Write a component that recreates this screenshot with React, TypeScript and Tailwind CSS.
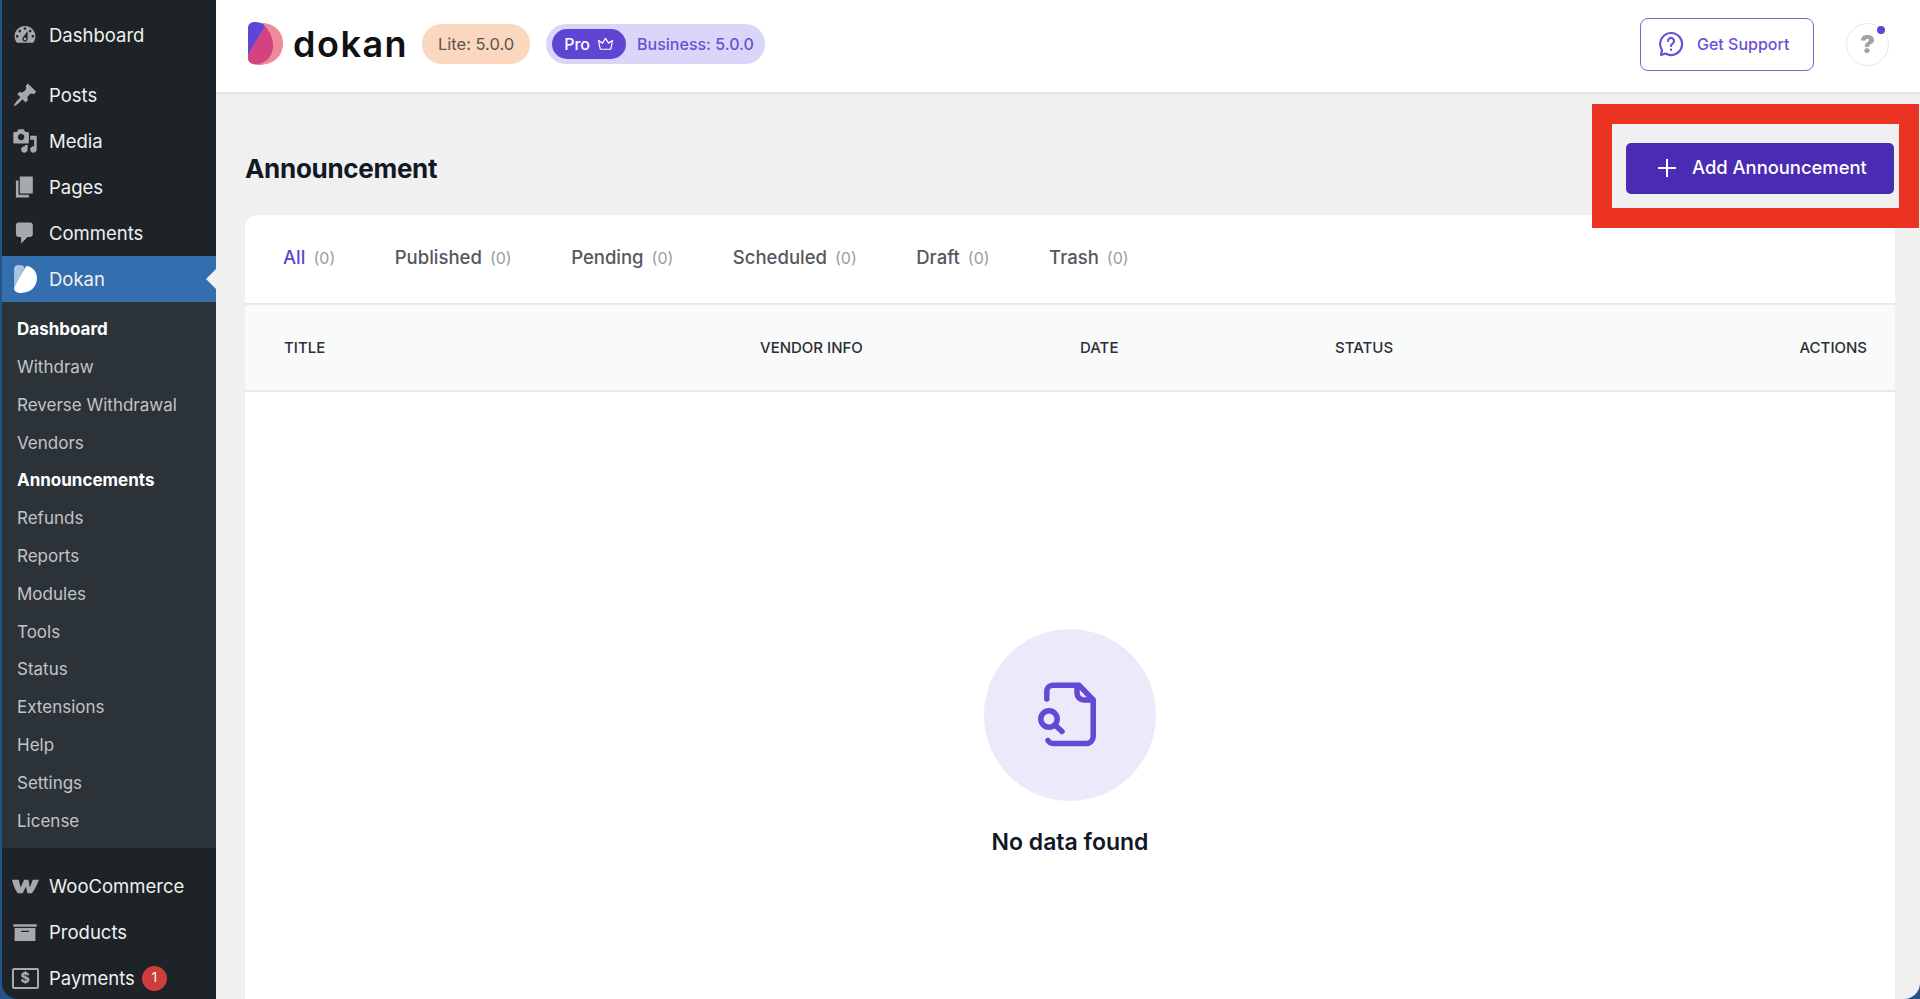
import { ReactNode } from "react";

const ICON_PATHS: Record<string, string> = {
  dashboard:
    "M3.76 16h12.48c1.1-1.37 1.76-3.11 1.76-5 0-4.42-3.58-8-8-8s-8 3.58-8 8c0 1.89.66 3.63 1.76 5zM10 4c.55 0 1 .45 1 1s-.45 1-1 1-1-.45-1-1 .45-1 1-1zM6 6c.55 0 1 .45 1 1s-.45 1-1 1-1-.45-1-1 .45-1 1-1zm8 0c.55 0 1 .45 1 1s-.45 1-1 1-1-.45-1-1 .45-1 1-1zm-5.37 5.55L12 7v6c0 1.1-.9 2-2 2s-2-.9-2-2c0-.57.24-1.08.63-1.45zM4 10c.55 0 1 .45 1 1s-.45 1-1 1-1-.45-1-1 .45-1 1-1zm12 0c.55 0 1 .45 1 1s-.45 1-1 1-1-.45-1-1 .45-1 1-1zm-5 3c0-.55-.45-1-1-1s-1 .45-1 1 .45 1 1 1 1-.45 1-1z",
  posts:
    "M10.44 3.02l1.82-1.82 6.36 6.35-1.83 1.82c-1.05-.68-2.48-.57-3.41.36l-.75.75c-.92.93-1.04 2.35-.35 3.41l-1.83 1.82-2.41-2.41-2.8 2.79c-.42.42-3.38 2.71-3.8 2.29s1.86-3.39 2.28-3.81l2.79-2.79L4.1 9.36l1.83-1.82c1.05.69 2.48.57 3.4-.36l.75-.75c.93-.92 1.05-2.35.36-3.41z",
  media:
    "M13 11V4c0-.55-.45-1-1-1h-1.67L9 1H5L3.67 3H2c-.55 0-1 .45-1 1v7c0 .55.45 1 1 1h10c.55 0 1-.45 1-1zM7 4.5c1.38 0 2.5 1.12 2.5 2.5S8.38 9.5 7 9.5 4.5 8.38 4.5 7 5.62 4.5 7 4.5zM14 6h5v10.5c0 1.38-1.12 2.5-2.5 2.5S14 17.88 14 16.5s1.12-2.5 2.5-2.5c.17 0 .34.02.5.05V9h-3V6zm-4 8.05V13h2v3.5c0 1.38-1.12 2.5-2.5 2.5S7 17.88 7 16.5 8.12 14 9.5 14c.17 0 .34.02.5.05z",
  pages: "M6 15V2h10v13H6zm-1 1h8v2H3V5h2v11z",
  comments:
    "M5 2h9c1.1 0 2 .9 2 2v7c0 1.1-.9 2-2 2h-2l-5 5v-5H5c-1.1 0-2-.9-2-2V4c0-1.1.9-2 2-2z",
  products: "M19 4v2H1V4h18zM2 7h16v10H2V7zm11 3V9H7v1h6z",
};

function DashIcon({ name }: { name: string }) {
  return (
    <svg viewBox="0 0 20 20" className="h-[26px] w-[26px] shrink-0 fill-[#a7aaad]">
      <path d={ICON_PATHS[name]} />
    </svg>
  );
}

function DokanMark({ white }: { white?: boolean }) {
  if (white) {
    return (
      <svg viewBox="0 0 36 44" className="h-[28px] w-[23px] shrink-0">
        <path d="M0 6C0 2 3 0 7 0c4 0 8 1 10 4L0 34z" fill="#a9c3e0" />
        <path d="M20 1c10 2 16 10 16 20 0 13-10 23-25 23C4 44 0 41 0 36c1-4 12-24 20-35z" fill="#fff" />
      </svg>
    );
  }
  return (
    <svg viewBox="0 0 36 44" className="h-[44px] w-[36px] shrink-0">
      <path d="M14 1c12 0 21 9 21 20 0 13-9 22-25 22-6 0-10-3-10-8V20C0 10 6 3 14 1z" fill="#ef8a98" />
      <path d="M17 4c5 6 8 12 8 20 0 10-7 18-17 18-5 0-8-2-8-6v-3z" fill="#d1447f" />
      <path d="M0 6C0 2 3 0 7 0c4 0 8 1 10 4L0 33z" fill="#5f45d6" />
    </svg>
  );
}

function MenuRow({ icon, label, children }: { icon: ReactNode; label: string; children?: ReactNode }) {
  return (
    <div className="flex h-[46px] items-center pl-[4px] text-[18.5px] text-[#f0f0f1]">
      <span className="flex w-[38px] justify-center">{icon}</span>
      <span className="ml-[5px] pt-[1px]">{label}</span>
      {children}
    </div>
  );
}

const SUBMENU = [
  "Dashboard",
  "Withdraw",
  "Reverse Withdrawal",
  "Vendors",
  "Announcements",
  "Refunds",
  "Reports",
  "Modules",
  "Tools",
  "Status",
  "Extensions",
  "Help",
  "Settings",
  "License",
];

function Sidebar() {
  return (
    <aside className="w-[214px] shrink-0 bg-[#1d2327] pt-[12px]">
      <MenuRow icon={<DashIcon name="dashboard" />} label="Dashboard" />
      <div className="mt-[14px]">
        <MenuRow icon={<DashIcon name="posts" />} label="Posts" />
        <MenuRow icon={<DashIcon name="media" />} label="Media" />
        <MenuRow icon={<DashIcon name="pages" />} label="Pages" />
        <MenuRow icon={<DashIcon name="comments" />} label="Comments" />
      </div>
      <div className="relative bg-[#336fae]">
        <MenuRow icon={<DokanMark white />} label="Dokan" />
        <span className="absolute right-0 top-[13px] h-0 w-0 border-y-[10px] border-r-[10px] border-y-transparent border-r-[#f0f0f1]" />
      </div>
      <div className="bg-[#2c3338] pb-[8px] pt-[9px] text-[17px] text-[#c3c4c7]">
        {SUBMENU.map((item) => (
          <div
            key={item}
            className={`flex h-[37.8px] items-center pl-[15px] ${
              item === "Dashboard" || item === "Announcements" ? "font-bold text-white" : ""
            }`}
          >
            {item}
          </div>
        ))}
      </div>
      <div className="mt-[15px]">
        <MenuRow
          icon={
            <svg viewBox="0 0 28 16" className="h-[17px] w-[27px] fill-[#a7aaad]">
              <path d="M0 1h7l2 8 3.500-8h4.500l1.500 8 3-8h6.500c-2 5-4 10-7.500 14h-4.500l-1.500-7-3.500 7H6C3 11 1 6 0 1z" />
            </svg>
          }
          label="WooCommerce"
        />
        <MenuRow icon={<DashIcon name="products" />} label="Products" />
        <MenuRow
          icon={
            <span className="flex h-[21px] w-[27px] items-center justify-center rounded-[2px] border-[2.5px] border-[#a7aaad] text-[14px] font-extrabold leading-none text-[#a7aaad]">
              $
            </span>
          }
          label="Payments"
        >
          <span className="ml-[7px] flex h-[25px] w-[25px] items-center justify-center rounded-full bg-[#cf3d3d] text-[13px] text-white">
            1
          </span>
        </MenuRow>
      </div>
    </aside>
  );
}

function Header() {
  return (
    <header className="flex h-[94px] shrink-0 items-center justify-between border-b-[2px] border-[#e4e4e5] bg-white pb-[4px] pl-[32px] pr-[31px]">
      <div className="flex items-center">
        <DokanMark />
        <span className="ml-[9px] text-[36px] font-semibold leading-none tracking-[1.5px] text-[#111]">dokan</span>
        <span className="ml-[14px] flex h-[40px] w-[108px] items-center justify-center rounded-full bg-[#fad7be] text-[16.5px] text-[#5b5650]">
          Lite: 5.0.0
        </span>
        <div className="ml-[16px] flex h-[40px] w-[219px] items-center rounded-full bg-[#d9d6fa] pl-[6px]">
          <span className="flex h-[30px] w-[74px] items-center justify-center gap-[7px] rounded-full bg-[#5f45d1] text-[16px] font-medium text-white">
            Pro
            <svg viewBox="0 0 18 16" className="h-[14px] w-[17px] fill-none stroke-white stroke-[1.4]">
              <path d="M3 14h12l2-10-4.500 3L9 1.500 5.500 7 1 4z" strokeLinejoin="round" />
            </svg>
          </span>
          <span className="ml-[11px] text-[16px] font-medium text-[#6a50d4]">Business: 5.0.0</span>
        </div>
      </div>
      <div className="flex items-center gap-[32px]">
        <button className="flex h-[53px] w-[174px] items-center justify-start gap-[13px] rounded-[8px] border-[1.5px] border-[#7a64cf] pl-[17px] text-[16px] font-medium text-[#6a50d4]">
          <svg viewBox="0 0 26 26" className="h-[26px] w-[26px] fill-none stroke-[#6a50d4] stroke-[2.2]">
            <path d="M13 2a11 11 0 1 1-5.500 20.500L3 24l1-5A11 11 0 0 1 13 2z" strokeLinejoin="round" />
            <path d="M10 10a3 3 0 1 1 4.500 2.600c-1 .6-1.500 1.200-1.500 2.400" strokeLinecap="round" />
            <path d="M13 18.500v.5" strokeLinecap="round" />
          </svg>
          Get Support
        </button>
        <div className="relative flex h-[43px] w-[43px] items-center justify-center rounded-full border border-[#e8e8e8] text-[25px] font-black leading-none text-[#a3a3a3]">
          ?
          <span className="absolute right-[3px] top-[2px] h-[8px] w-[8px] rounded-full bg-[#5f45d1]" />
        </div>
      </div>
    </header>
  );
}

const TABS = ["All", "Published", "Pending", "Scheduled", "Draft", "Trash"];

function EmptyState() {
  return (
    <div className="flex flex-col items-center pt-[237px]">
      <div className="flex h-[172px] w-[172px] items-center justify-center rounded-full bg-[#ece9fb]">
        <svg viewBox="87 71 86 86" className="h-[86px] w-[86px] fill-none stroke-[#6449d6] stroke-[5.5]" strokeLinecap="round" strokeLinejoin="round">
          <path d="M106.800 98V90.200a6 6 0 0 1 6-6H139L153.200 99V135.500a7 7 0 0 1-7 7H113a6 6 0 0 1-5-3" />
          <path d="M137 85v7a7 7 0 0 0 7 7h9" />
          <circle cx="109" cy="118" r="8.200" />
          <path d="M115.500 124.500l6.500 6" />
        </svg>
      </div>
      <p className="mt-[26px] text-[23px] font-semibold leading-[30px] text-[#111827]">No data found</p>
    </div>
  );
}

function MainPanel() {
  return (
    <main className="flex min-w-0 flex-1 flex-col bg-[#f0f0f1]">
      <Header />
      <div className="flex flex-1 flex-col pl-[29px] pr-[25px]">
        <div className="flex h-[121px] shrink-0 items-center justify-between pb-[22px] pt-[49px]">
          <h1 className="text-[26px] font-bold tracking-[-0.3px] text-[#111827]">Announcement</h1>
          <button className="mr-[1px] flex h-[51px] w-[268px] shrink-0 items-center justify-start gap-[16px] rounded-[5px] bg-[#4a2bb3] pl-[32px] text-[18.4px] font-medium text-white">
            <svg viewBox="0 0 18 18" className="h-[18px] w-[18px] stroke-white stroke-[2]">
              <path d="M9 0v18M0 9h18" />
            </svg>
            Add Announcement
          </button>
        </div>
        <section className="flex-1 rounded-t-[12px] bg-white">
          <div className="flex h-[88px] items-center gap-[59.5px] pb-[2px] pl-[38px] text-[18.5px] font-medium text-[#55585f]">
            {TABS.map((tab) => (
              <span key={tab} className={`flex items-baseline gap-[8px] ${tab === "All" ? "text-[#5f45d1]" : ""}`}>
                {tab}
                <span className="text-[16px] font-normal text-[#9a9ca1]">(0)</span>
              </span>
            ))}
          </div>
          <div className="flex h-[89px] items-center border-y-[2px] border-[#e9e9ea] bg-[#f9fafa] pl-[39px] pr-[28px] pt-[2px] text-[15px] font-medium uppercase text-[#2b2f36]">
            <span className="w-[476px]">Title</span>
            <span className="w-[320px]">Vendor Info</span>
            <span className="w-[255px]">Date</span>
            <span>Status</span>
            <span className="ml-auto">Actions</span>
          </div>
          <EmptyState />
        </section>
      </div>
    </main>
  );
}

export default function App() {
  return (
    <div className="relative h-[999px] w-[1920px] overflow-hidden bg-[#235489] font-['Inter',sans-serif]">
      <div className="ml-[2px] flex h-full overflow-hidden rounded-b-[16px]">
        <Sidebar />
        <MainPanel />
      </div>
      {/* red annotation drawn over the screenshot */}
      <div className="absolute left-[1592px] top-[104px] h-[124px] w-[327px] border-[20px] border-[#ec3323]" />
    </div>
  );
}
